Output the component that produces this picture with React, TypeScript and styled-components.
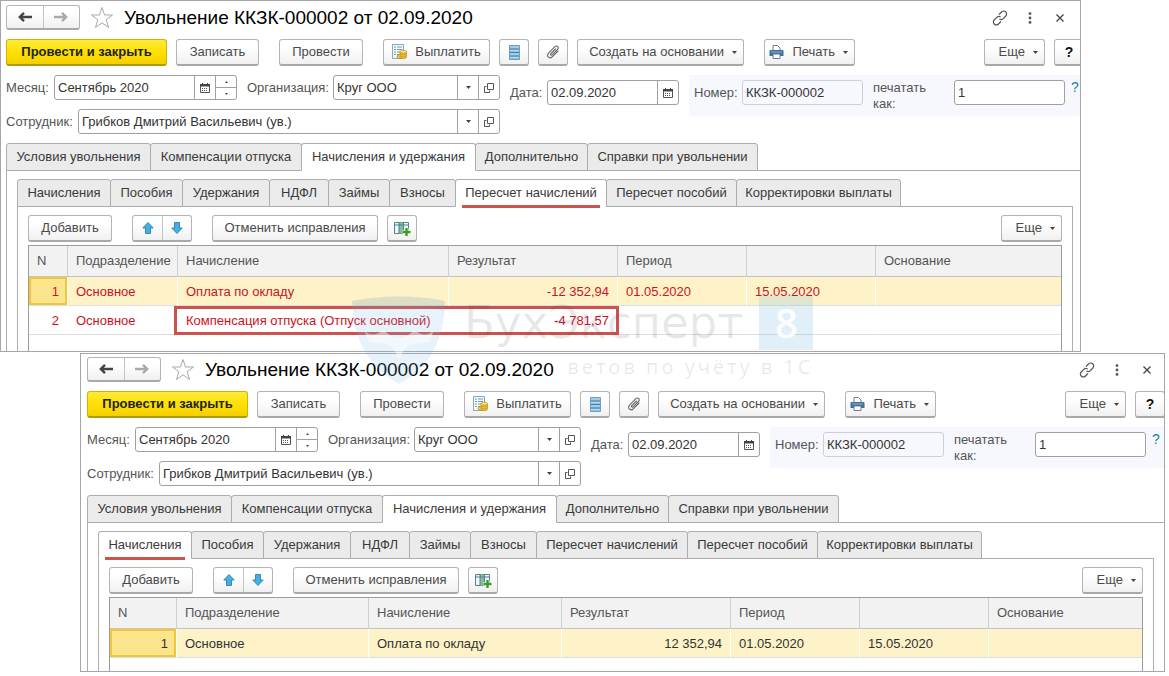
import React, { useId } from "react";
import styled, { createGlobalStyle, css } from "styled-components";

const GlobalStyle = createGlobalStyle`
  * { box-sizing: border-box; }
  body {
    margin: 0;
    background: #fff;
    font-family: "Liberation Sans", Arial, sans-serif;
    font-size: 13px;
    line-height: 16px;
    color: #444;
  }
  button, input { font: inherit; color: inherit; margin: 0; }
`;

/* ---------- windows ---------- */

const Desktop = styled.main`
  position: relative;
  display: flex;
  flex-direction: column;
  gap: 1px;
`;

const WindowFrame = styled.section<{ $back?: boolean }>`
  overflow: hidden;
  background: #fff;
  border: 1px solid #a6a6a6;
  margin: ${(p) => (p.$back ? "0 88px 0 0" : "0 4px 0 80px")};
  padding: ${(p) => (p.$back ? "4px 0 0 5px" : "3px 0 0 6px")};
  --edge: ${(p) => (p.$back ? "0px" : "3px")};
`;

const TitleBar = styled.header`
  display: flex;
  align-items: center;
  height: 25px;
  padding-right: 12px;
`;

const Title = styled.h1`
  flex: 1;
  margin: 0 0 0 10px;
  font-size: 19px;
  line-height: 24px;
  font-weight: 400;
  color: #000;
`;

const WindowActions = styled.div`
  display: flex;
  gap: 14px;
  margin-right: calc(0px - var(--edge));
`;

const IconButton = styled.button`
  display: flex;
  align-items: center;
  justify-content: center;
  width: 16px;
  height: 18px;
  padding: 0;
  border: 0;
  background: none;
  color: #555;
`;

const StarButton = styled(IconButton)`
  width: 24px;
  height: 24px;
  margin-left: 10px;
`;

/* ---------- buttons ---------- */

const Bar = styled.div`
  display: flex;
  gap: 20px;
  height: 27px;
`;

const MainBar = styled(Bar)`
  margin: 9px 0;
`;

const BarGroup = styled.div<{ $end?: boolean }>`
  display: flex;
  gap: 9px;
  ${(p) => p.$end && "margin-left: auto;"}
`;

const HelpEdge = styled.div`
  display: flex;
  margin-right: calc(var(--edge) - 4px);
`;

const raised = css`
  border: 1px solid #b4b4b4;
  border-bottom: 2px solid #a9a9a9;
  background: linear-gradient(#fff 30%, #f0f0f0);
`;

const Button = styled.button<{ $w: number; $primary?: boolean }>`
  ${raised}
  display: flex;
  align-items: center;
  justify-content: center;
  gap: 8px;
  flex: none;
  width: ${(p) => p.$w}px;
  height: 27px;
  padding: 0;
  border-radius: 3px;
  color: #4a4a4a;
  white-space: nowrap;
  ${(p) =>
    p.$primary &&
    css`
      border-color: #d2b400 #d2b400 #b39a00;
      background: linear-gradient(#ffea3c, #ffe100 50%, #f5cf00);
      color: #222;
      font-weight: 700;
    `}
`;

const HelpButton = styled(Button)`
  color: #111;
  font-size: 14px;
  font-weight: 700;
`;

const MenuButton = styled(Button)`
  justify-content: flex-end;
  padding-right: 6px;
`;

const Pair = styled.div`
  ${raised}
  display: flex;
  height: 27px;
  border-radius: 3px;
`;

const NavPair = styled(Pair)`
  height: 25px;
  width: 74px;
`;

const PairButton = styled.button`
  display: flex;
  align-items: center;
  justify-content: center;
  flex: 1;
  min-width: 29px;
  padding: 0;
  border: 0;
  background: none;
  & + & { border-left: 1px solid #c4c4c4; }
`;

/* ---------- form ---------- */

const Form = styled.div`
  display: flex;
  align-items: flex-start;
  gap: 10px;
  height: 59px;
  margin-bottom: 9px;
`;

const FieldColumn = styled.div`
  display: flex;
  flex-direction: column;
  gap: 9px;
  width: 494px;
  flex: none;
`;

const FieldRow = styled.div`
  display: flex;
  align-items: center;
  gap: 10px;
`;

const Field = styled.div<{ $grow?: boolean }>`
  display: flex;
  align-items: center;
  min-width: 0;
  flex: ${(p) => (p.$grow ? "1" : "none")};
`;

const DateField = styled(Field)`
  margin-top: 5px;
`;

const Label = styled.label<{ $w: number }>`
  flex: none;
  width: ${(p) => p.$w}px;
  color: #555;
`;

const Box = styled.div<{ $w?: number; $readonly?: boolean }>`
  display: flex;
  min-width: 0;
  ${(p) => (p.$w ? `width: ${p.$w}px;` : "flex: 1;")}
  height: 25px;
  border: 1px solid ${(p) => (p.$readonly ? "#cdd0d8" : "#a0a0a0")};
  border-radius: 3px;
  overflow: hidden;
  background: ${(p) => (p.$readonly ? "transparent" : "#fff")};
`;

const Input = styled.input`
  flex: 1;
  min-width: 0;
  width: 0;
  padding: 0 3px;
  border: 0;
  outline: 0;
  background: none;
  color: #333;
`;

const BoxButton = styled.button`
  display: flex;
  align-items: center;
  justify-content: center;
  flex: none;
  width: 21px;
  padding: 0;
  border: 0;
  border-left: 1px solid #a0a0a0;
  background: none;
  color: #444;
`;

const Spinner = styled.div`
  display: flex;
  flex-direction: column;
  width: 21px;
  border-left: 1px solid #a0a0a0;
`;

const SpinnerButton = styled.button`
  display: flex;
  align-items: center;
  justify-content: center;
  flex: 1;
  padding: 0;
  border: 0;
  background: none;
  & + & { border-top: 1px solid #a0a0a0; }
`;

const NumberArea = styled.div`
  display: flex;
  align-items: flex-start;
  flex: 1;
  height: 41px;
  padding: 5px 0 0 5px;
  background: #f7f8fd;
`;

const PrintField = styled.div`
  display: flex;
  margin-left: 10px;
`;

const Hint = styled.a`
  margin-left: 6px;
  height: 16px;
  font-size: 14px;
  line-height: 14px;
  color: #1583a8;
  text-decoration: none;
`;

/* ---------- tabs ---------- */

const TabStrip = styled.div`
  display: flex;
`;

const Tab = styled.button<{ $w: number; $active?: boolean }>`
  position: relative;
  flex: none;
  width: ${(p) => p.$w}px;
  height: 28px;
  margin: 0 -1px -1px 0;
  padding: 0;
  border: 1px solid #adadad;
  border-radius: 3px 3px 0 0;
  background: #ebebeb;
  color: #3a3a3a;
  white-space: nowrap;
  ${(p) => p.$active && "background: #fff; border-bottom-color: #fff;"}
`;

const Underline = styled.span`
  position: absolute;
  left: 6px;
  right: 6px;
  bottom: -2px;
  height: 3px;
  background: #cd524c;
`;

const Panel = styled.div`
  padding: 8px 0 0 10px;
  border: solid #adadad;
  border-width: 1px 0 0 1px;
`;

const InnerPanel = styled.div`
  margin-right: calc(7px + var(--edge));
  padding: 8px 10px 0;
  border: solid #adadad;
  border-width: 1px 1px 0;
`;

/* ---------- data table ---------- */

const TableBox = styled.div<{ $tail: number }>`
  margin-top: 3px;
  padding-bottom: ${(p) => p.$tail}px;
  border: solid #9c9c9c;
  border-width: 1px 1px 0;
`;

const Table = styled.table`
  width: 100%;
  table-layout: fixed;
  border-collapse: separate;
  border-spacing: 0;
`;

const Th = styled.th`
  height: 31px;
  padding: 0 8px;
  border-right: 1px solid #cfcfcf;
  border-bottom: 1px solid #c4c4c4;
  background: #f2f2f2;
  color: #555;
  font-weight: 400;
  text-align: left;
  white-space: nowrap;
  &:last-child { border-right: 0; }
`;

const Tr = styled.tr<{ $selected?: boolean; $red?: boolean }>`
  color: ${(p) => (p.$red ? "#cc1226" : "#333")};
  background: ${(p) => (p.$selected ? "#fdf2c8" : "#fff")};
`;

const Td = styled.td<{ $right?: boolean; $current?: boolean }>`
  position: relative;
  height: 29px;
  padding: 1px 8px 0;
  border-right: 1px solid #fff;
  border-bottom: 1px solid #dedede;
  text-align: ${(p) => (p.$right ? "right" : "left")};
  white-space: nowrap;
  &:last-child { border-right: 0; }
  ${(p) => p.$current && "background: #fbe48c; box-shadow: inset 0 0 0 2px #f0c63c;"}
`;

const RedFrame = styled.span`
  position: absolute;
  z-index: 1;
  top: 0;
  left: -4px;
  width: calc(100% + 175px);
  height: 29px;
  border: 3px solid #cd524c;
`;

/* ---------- watermark ---------- */

const Watermark = styled.div`
  position: absolute;
  z-index: 2;
  left: 352px;
  top: 296px;
  display: flex;
  gap: 18px;
  pointer-events: none;
`;

const Brand = styled.div`
  display: flex;
  flex-direction: column;
  align-items: flex-end;
  gap: 5px;
  color: rgba(70, 70, 90, 0.12);
`;

const BrandLine = styled.div`
  display: flex;
  gap: 16px;
  font: 45px/54px "DejaVu Sans", sans-serif;
`;

const Eight = styled.span`
  width: 54px;
  height: 54px;
  background: rgba(120, 185, 225, 0.22);
  color: rgba(255, 255, 255, 0.9);
  font-size: 40px;
  font-family: "Open Sans", sans-serif;
  font-weight: 600;
  text-align: center;
`;

const Slogan = styled.div`
  font: 20px/24px "Open Sans", sans-serif;
  letter-spacing: 3px;
  color: rgba(70, 70, 90, 0.12);
`;

/* ---------- icons ---------- */

const Arrow = ({ back, color }: { back?: boolean; color: string }) => (
  <svg width="14" height="12" viewBox="0 0 14 12" fill="none" stroke={color} strokeWidth="2.4">
    {back ? <path d="M14 6H2M6 1.8 1.8 6 6 10.200" /> : <path d="M0 6h12M8 1.800 12.200 6 8 10.200" />}
  </svg>
);

const Star = () => (
  <svg width="24" height="24" viewBox="0 0 24 24" fill="#fff" stroke="#a8a8a8">
    <path d="M12 1.500 14.600 9H22.500L16.200 13.700 18.500 21.500 12 16.800 5.500 21.500 7.800 13.700 1.500 9H9.400Z" />
  </svg>
);

const LinkIcon = () => (
  <svg width="16" height="16" viewBox="0 0 16 16" fill="none" stroke="#555" strokeWidth="1.2">
    <path d="M7 4.500 9.500 2a2.800 2.800 0 0 1 4.300 0 2.800 2.800 0 0 1 0 4L11 8.800a2.800 2.800 0 0 1-3.600.300M9 11.500 6.500 14a2.800 2.800 0 0 1-4.300 0 2.800 2.800 0 0 1 0-4L5 7.200a2.800 2.800 0 0 1 3.600-.300" />
  </svg>
);

const Dots = () => (
  <svg width="4" height="12" viewBox="0 0 4 12" fill="#555">
    <circle cx="2" cy="1.600" r="1.400" />
    <circle cx="2" cy="6" r="1.400" />
    <circle cx="2" cy="10.400" r="1.400" />
  </svg>
);

const Cross = () => (
  <svg width="8" height="8" viewBox="0 0 8 8" stroke="#444" strokeWidth="1.300">
    <path d="M.5.5l7 7M7.500.5l-7 7" />
  </svg>
);

const Caret = () => (
  <svg width="5" height="3" viewBox="0 0 5 3" fill="#444">
    <path d="M0 0h5L2.500 3Z" />
  </svg>
);

const SmallCaret = ({ up }: { up?: boolean }) => (
  <svg width="3" height="2" viewBox="0 0 3 2" fill="#444">
    <path d={up ? "M0 2h3L1.500 0Z" : "M0 0h3L1.500 2Z"} />
  </svg>
);

const PayIcon = () => (
  <svg width="15" height="16" viewBox="0 0 15 16">
    <path d="M.5.5h11v14H.5z" fill="#f4f9fc" stroke="#8ba7b8" />
    <path d="M2 3h2M2 5.500h2M2 8h2M2 10.500h2M5 3h5M5 5.500h5M5 8h3M5 10.500h2" stroke="#6d9cba" />
    <ellipse cx="8" cy="12.500" rx="3" ry="2" fill="#f3c93d" stroke="#b98f1e" strokeWidth=".7" />
    <path d="M8 7.500v5.500c0 2 6.500 2 6.500 0V7.500z" fill="#f0bf30" stroke="#b98f1e" strokeWidth=".7" />
    <path d="M8 9.500c1 1.500 5.500 1.500 6.500 0M8 11.500c1 1.500 5.500 1.500 6.500 0" fill="none" stroke="#b98f1e" strokeWidth=".6" />
    <ellipse cx="11.250" cy="7.700" rx="3.250" ry="1.500" fill="#fbe48a" stroke="#b98f1e" strokeWidth=".7" />
  </svg>
);

const ListIcon = () => (
  <svg width="11" height="15" viewBox="0 0 11 15">
    <path d="M.5.5h10v14H.5z" fill="#8fc1e4" stroke="#6f9fc0" />
    <path d="M1 4h9M1 7.500h9M1 11h9" stroke="#4d7d9f" />
    <path d="M1 2h9M1 5.500h9M1 9h9M1 12.500h9" stroke="#b4d9f1" />
  </svg>
);

const ClipIcon = () => (
  <svg width="14" height="14" viewBox="0 0 14 14" fill="none" stroke="#666" strokeWidth="1.100" strokeLinecap="round">
    <path d="M9.500 4 4.800 8.700c-.9.9.3 2.100 1.200 1.200l5.500-5.500c1.900-1.900-.6-4.600-2.600-2.700L2.500 8.100c-2.700 2.700 1 6.300 3.700 3.700L12 6" />
  </svg>
);

const PrinterIcon = () => (
  <svg width="15" height="14" viewBox="0 0 15 14">
    <path d="M4 5V.5h4.500L11 3v2" fill="#fff" stroke="#6a7f92" />
    <path d="M1.500 5h12a1 1 0 0 1 1 1v5h-14V6a1 1 0 0 1 1-1Z" fill="#3f6f99" />
    <path d="M2 7h11" stroke="#8fb3d0" />
    <path d="M4 9h7v4.500H4z" fill="#fff" stroke="#6a7f92" />
  </svg>
);

const CalendarIcon = () => (
  <svg width="10" height="10" viewBox="0 0 10 10">
    <path d="M.5 1.500h9v8h-9z" fill="#fff" stroke="#555" />
    <path d="M0 1h10v2.500H0z" fill="#444" />
    <path d="M2.500 0v2M7.500 0v2" stroke="#444" />
    <path d="M2 5.500h6M2 7.500h6" stroke="#555" strokeDasharray="1 1" />
  </svg>
);

const OpenIcon = () => (
  <svg width="10" height="10" viewBox="0 0 10 10" fill="none" stroke="#555">
    <path d="M3.500.5h6v6h-6zM2.500 3.500h-2v6h5v-2" />
  </svg>
);

const BlueArrow = ({ down }: { down?: boolean }) => (
  <svg width="12" height="12" viewBox="0 0 12 12" fill="#45aee3" stroke="#2f7fae" strokeWidth=".9" strokeLinejoin="round">
    <path d={down ? "M6 11.500.8 6H3.500V.5h5V6h2.700Z" : "M6 .5.8 6H3.500v5.500h5V6h2.700Z"} />
  </svg>
);

const TableAddIcon = () => (
  <svg width="17" height="15" viewBox="0 0 17 15">
    <path d="M.5 1.500h14v11H.5z" fill="#eef7fb" stroke="#54808f" />
    <path d="M5 1.500h4.500v11H5z" fill="#86bd9a" />
    <path d="M.5 4h14M5 1v11.500M9.500 1v11.500" stroke="#54808f" fill="none" />
    <path d="M12.500 7v8M8.500 11h8" stroke="#fff" strokeWidth="4" />
    <path d="M12.500 7v8M8.500 11h8" stroke="#3c9a27" strokeWidth="2.400" />
  </svg>
);

const Shield = () => (
  <svg width="94" height="88" viewBox="0 0 94 88">
    <path d="M0 5C28-1 66-1 93 5 92 42 80 70 47 88 14 70 2 42 0 5Z" fill="#78b9e1" fillOpacity=".18" />
    <path d="M0 5C28-1 66-1 93 5L92 15C66 9 28 9 1 15Z" fill="#556" fillOpacity=".06" />
    <path d="M12 34c6 8 14 4 20 0 8 10 22 10 30 0 6 5 14 7 20 0l-5 12C68 48 56 46 52 54l-5 9-5-9c-4-8-16-6-25-8Z" fill="#fff" fillOpacity=".45" />
  </svg>
);

/* ---------- parts ---------- */

const MAIN_TABS: [string, number][] = [
  ["Условия увольнения", 145],
  ["Компенсации отпуска", 152],
  ["Начисления и удержания", 175],
  ["Дополнительно", 113],
  ["Справки при увольнении", 171],
];

const SUB_TABS: [string, number][] = [
  ["Начисления", 94],
  ["Пособия", 73],
  ["Удержания", 88],
  ["НДФЛ", 60],
  ["Займы", 62],
  ["Взносы", 67],
  ["Пересчет начислений", 152],
  ["Пересчет пособий", 131],
  ["Корректировки выплаты", 165],
];

const HEADERS = ["N", "Подразделение", "Начисление", "Результат", "Период", "", "Основание"];

interface Row {
  cells: string[];
  selected?: boolean;
  red?: boolean;
  framed?: boolean;
}

interface DocumentProps {
  back?: boolean;
  activeTab: string;
  columns: number[];
  rows: Row[];
  tail: number;
}

const More = () => (
  <MenuButton $w={61}>
    Еще <Caret />
  </MenuButton>
);

function DocumentWindow({ back, activeTab, columns, rows, tail }: DocumentProps) {
  const id = useId();
  return (
    <WindowFrame $back={back}>
      <TitleBar>
        <NavPair>
          <PairButton aria-label="Назад"><Arrow back color="#444" /></PairButton>
          <PairButton aria-label="Вперед"><Arrow color="#aaa" /></PairButton>
        </NavPair>
        <StarButton aria-label="В избранное"><Star /></StarButton>
        <Title>Увольнение ККЗК-000002 от 02.09.2020</Title>
        <WindowActions>
          <IconButton aria-label="Ссылка"><LinkIcon /></IconButton>
          <IconButton aria-label="Меню"><Dots /></IconButton>
          <IconButton aria-label="Закрыть"><Cross /></IconButton>
        </WindowActions>
      </TitleBar>

      <MainBar>
        <BarGroup>
          <Button $w={161} $primary>Провести и закрыть</Button>
          <Button $w={83}>Записать</Button>
        </BarGroup>
        <Button $w={84}>Провести</Button>
        <BarGroup>
          <Button $w={107}><PayIcon />Выплатить</Button>
          <Button $w={30} aria-label="Список"><ListIcon /></Button>
          <Button $w={30} aria-label="Файлы"><ClipIcon /></Button>
          <MenuButton $w={167}>Создать на основании <Caret /></MenuButton>
        </BarGroup>
        <MenuButton $w={91}><PrinterIcon />Печать <Caret /></MenuButton>
        <BarGroup $end>
          <More />
          <HelpEdge><HelpButton $w={30}>?</HelpButton></HelpEdge>
        </BarGroup>
      </MainBar>

      <Form>
        <FieldColumn>
          <FieldRow>
            <Field>
              <Label $w={48} htmlFor={id + "month"}>Месяц:</Label>
              <Box $w={183}>
                <Input id={id + "month"} defaultValue="Сентябрь 2020" />
                <BoxButton aria-label="Календарь"><CalendarIcon /></BoxButton>
                <Spinner>
                  <SpinnerButton aria-label="Больше"><SmallCaret up /></SpinnerButton>
                  <SpinnerButton aria-label="Меньше"><SmallCaret /></SpinnerButton>
                </Spinner>
              </Box>
            </Field>
            <Field $grow>
              <Label $w={86} htmlFor={id + "org"}>Организация:</Label>
              <Box>
                <Input id={id + "org"} defaultValue="Круг ООО" />
                <BoxButton aria-label="Выбрать"><Caret /></BoxButton>
                <BoxButton aria-label="Открыть"><OpenIcon /></BoxButton>
              </Box>
            </Field>
          </FieldRow>
          <Field>
            <Label $w={72} htmlFor={id + "person"}>Сотрудник:</Label>
            <Box>
              <Input id={id + "person"} defaultValue="Грибков Дмитрий Васильевич (ув.)" />
              <BoxButton aria-label="Выбрать"><Caret /></BoxButton>
              <BoxButton aria-label="Открыть"><OpenIcon /></BoxButton>
            </Box>
          </Field>
        </FieldColumn>
        <DateField>
          <Label $w={37} htmlFor={id + "date"}>Дата:</Label>
          <Box $w={132}>
            <Input id={id + "date"} defaultValue="02.09.2020" />
            <BoxButton aria-label="Календарь"><CalendarIcon /></BoxButton>
          </Box>
        </DateField>
        <NumberArea>
          <Field>
            <Label $w={48} htmlFor={id + "number"}>Номер:</Label>
            <Box $w={121} $readonly>
              <Input id={id + "number"} defaultValue="ККЗК-000002" readOnly />
            </Box>
          </Field>
          <PrintField>
            <Label $w={81} htmlFor={id + "print"}>печатать<br />как:</Label>
            <Box $w={111}>
              <Input id={id + "print"} defaultValue="1" />
            </Box>
            <Hint href="#help">?</Hint>
          </PrintField>
        </NumberArea>
      </Form>

      <TabStrip>
        {MAIN_TABS.map(([name, w]) => (
          <Tab key={name} $w={w} $active={name === "Начисления и удержания"}>{name}</Tab>
        ))}
      </TabStrip>
      <Panel>
        <TabStrip>
          {SUB_TABS.map(([name, w]) => (
            <Tab key={name} $w={w} $active={name === activeTab}>
              {name}
              {name === activeTab && <Underline />}
            </Tab>
          ))}
        </TabStrip>
        <InnerPanel>
          <Bar>
            <Button $w={84}>Добавить</Button>
            <Pair>
              <PairButton aria-label="Вверх"><BlueArrow /></PairButton>
              <PairButton aria-label="Вниз"><BlueArrow down /></PairButton>
            </Pair>
            <BarGroup>
              <Button $w={166}>Отменить исправления</Button>
              <Button $w={30} aria-label="Добавить колонку"><TableAddIcon /></Button>
            </BarGroup>
            <BarGroup $end><More /></BarGroup>
          </Bar>
          <TableBox $tail={tail}>
            <Table>
              <colgroup>
                {columns.map((w, i) => <col key={i} width={w} />)}
                <col />
              </colgroup>
              <thead>
                <tr>{HEADERS.map((h, i) => <Th key={i}>{h}</Th>)}</tr>
              </thead>
              <tbody>
                {rows.map((row, r) => (
                  <Tr key={r} $selected={row.selected} $red={row.red}>
                    {row.cells.map((text, i) => (
                      <Td key={i} $right={i === 0 || i === 3} $current={row.selected && i === 0}>
                        {text}
                        {row.framed && i === 2 && <RedFrame />}
                      </Td>
                    ))}
                  </Tr>
                ))}
              </tbody>
            </Table>
          </TableBox>
        </InnerPanel>
      </Panel>
    </WindowFrame>
  );
}

export default function App() {
  return (
    <>
      <GlobalStyle />
      <Desktop>
        <DocumentWindow
          back
          activeTab="Пересчет начислений"
          columns={[39, 110, 271, 169, 129, 129]}
          tail={16}
          rows={[
            {
              cells: ["1", "Основное", "Оплата по окладу", "-12 352,94", "01.05.2020", "15.05.2020", ""],
              selected: true,
              red: true,
            },
            {
              cells: ["2", "Основное", "Компенсация отпуска (Отпуск основной)", "-4 781,57", "", "", ""],
              red: true,
              framed: true,
            },
          ]}
        />
        <DocumentWindow
          activeTab="Начисления"
          columns={[67, 192, 193, 169, 129, 129]}
          tail={13}
          rows={[
            {
              cells: ["1", "Основное", "Оплата по окладу", "12 352,94", "01.05.2020", "15.05.2020", ""],
              selected: true,
            },
          ]}
        />
        <Watermark aria-hidden>
          <Shield />
          <Brand>
            <BrandLine>
              БухЭксперт<Eight>8</Eight>
            </BrandLine>
            <Slogan>ветов по учёту в 1С</Slogan>
          </Brand>
        </Watermark>
      </Desktop>
    </>
  );
}
